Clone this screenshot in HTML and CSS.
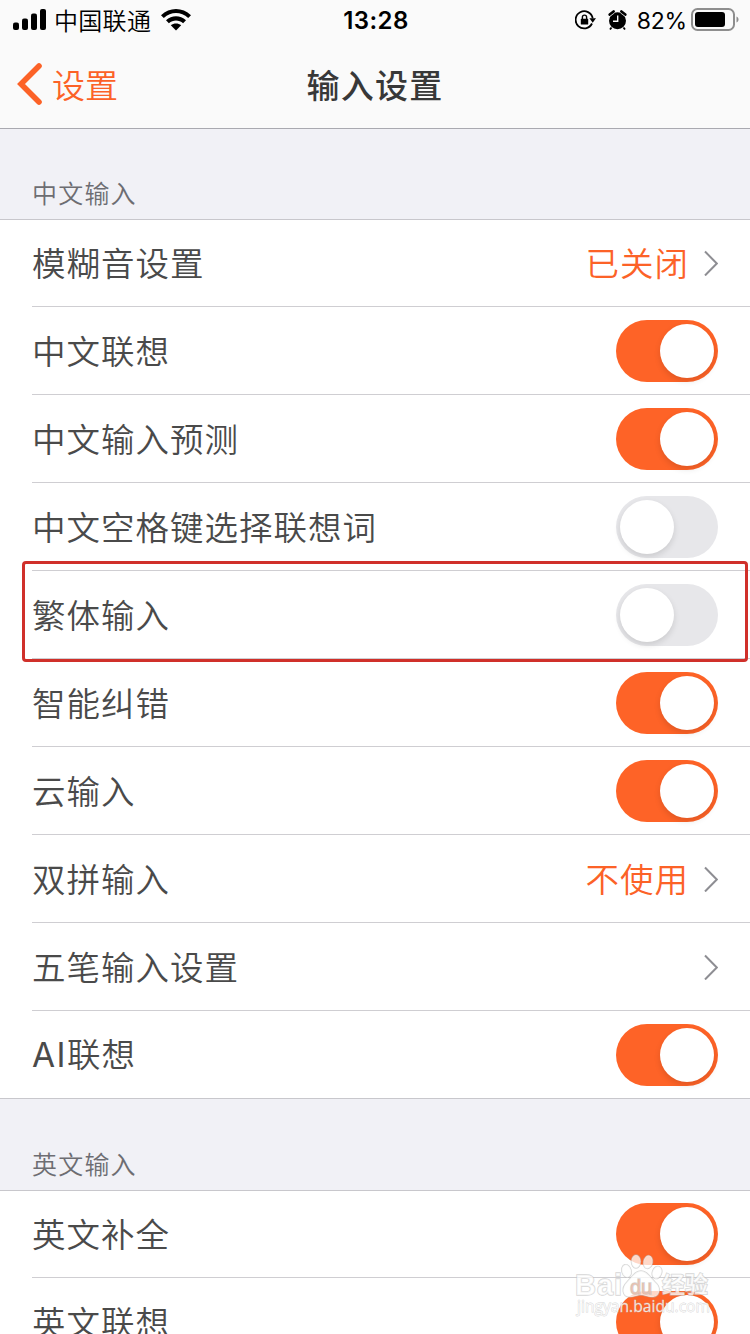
FILE: index.html
```html
<!DOCTYPE html>
<html lang="zh-CN">

<head>
    <meta charset="UTF-8">
    <meta name="viewport" content="width=device-width, initial-scale=1.0">
    <title>输入设置</title>
    <link rel="stylesheet" href="styles.css">
</head>

<body>

    <!-- Header -->
    <header>
        <div class="status-bar">
            <div class="status-left">
                <svg class="signal" width="33" height="22" viewBox="0 0 33 22">
                    <rect x="0" y="13.5" width="6" height="7.5" rx="2"/>
                    <rect x="9" y="9.5" width="6" height="11.5" rx="2"/>
                    <rect x="18" y="4.5" width="6" height="16.5" rx="2"/>
                    <rect x="27" y="0" width="6" height="21" rx="2"/>
                </svg>
                <span class="carrier">中国联通</span>
                <svg class="wifi" width="30" height="22" viewBox="0 0 30 22">
                    <path d="M0 6.2C8.5 -2 21.5 -2 30 6.2L27.2 9C20 2.4 10 2.4 2.8 9Z"/>
                    <path d="M5 11.3C10.7 6 19.3 6 25 11.3L22.1 14.2C18 10.6 12 10.6 7.9 14.2Z"/>
                    <path d="M9.8 16.3C12.8 13.9 17.2 13.9 20.2 16.3L15 21.5Z"/>
                </svg>
            </div>
            <div class="time">13:28</div>
            <div class="status-right">
                <svg class="lock" width="21" height="20" viewBox="0 0 21 20">
                    <path d="M17 13.5A8.6 8.6 0 1 1 17.7 8.4" fill="none" stroke="#000" stroke-width="1.8"/>
                    <path d="M14.4 8.2H21L17.7 12.8Z"/>
                    <rect x="5.8" y="8.8" width="7.4" height="5.8" rx="0.6"/>
                    <path d="M7.4 9V7.2A2.1 2.1 0 0 1 11.6 7.2V9" fill="none" stroke="#000" stroke-width="1.4"/>
                </svg>
                <svg class="alarm" width="19" height="21" viewBox="0 0 19 21">
                    <circle cx="9.5" cy="10.7" r="8.5"/>
                    <path d="M1.7 4.6L5.6 1.4M17.3 4.6L13.4 1.4" stroke="#000" stroke-width="2.6" stroke-linecap="round"/>
                    <path d="M3.5 17.5L2 19.6M15.5 17.5L17 19.6" stroke="#000" stroke-width="1.8"/>
                    <path d="M2.4 6.2L6.6 2.8M16.6 6.2L12.4 2.8" stroke="#fafafa" stroke-width="0.7"/>
                    <path d="M9.7 5.5V11.2H5" fill="none" stroke="#fafafa" stroke-width="1.4"/>
                </svg>
                <span class="percent">82%</span>
                <svg class="battery" width="48" height="24" viewBox="0 0 48 24">
                    <rect x="1" y="1" width="42" height="21" rx="5.5" fill="none" stroke="#8e8e8e" stroke-width="2"/>
                    <rect x="4" y="4" width="30" height="15" rx="3"/>
                    <path d="M45.5 8.5C48.2 9.5 48.2 13.5 45.5 14.5Z" fill="#8e8e8e"/>
                </svg>
            </div>
        </div>
        <nav>
            <a class="back" href="#">
                <svg width="26" height="42" viewBox="0 0 26 42">
                    <path d="M23 3L5 21L23 39" fill="none" stroke="#fc6227" stroke-width="5.6" stroke-linecap="round"/>
                </svg>
                <span>设置</span>
            </a>
            <h1>输入设置</h1>
        </nav>
    </header>

    <!-- Chinese Input -->
    <section>
        <h2>中文输入</h2>
        <ul>
            <li>
                <span class="label">模糊音设置</span>
                <span class="value">已关闭</span>
                <svg class="arrow" width="14" height="26" viewBox="0 0 14 26"><path d="M1 1.5L12.8 13.5L1 25.5"/></svg>
            </li>
            <li><span class="label">中文联想</span><span class="switch on"></span></li>
            <li><span class="label">中文输入预测</span><span class="switch on"></span></li>
            <li><span class="label">中文空格键选择联想词</span><span class="switch"></span></li>
            <li class="marked"><span class="label">繁体输入</span><span class="switch"></span></li>
            <li><span class="label">智能纠错</span><span class="switch on"></span></li>
            <li><span class="label">云输入</span><span class="switch on"></span></li>
            <li>
                <span class="label">双拼输入</span>
                <span class="value">不使用</span>
                <svg class="arrow" width="14" height="26" viewBox="0 0 14 26"><path d="M1 1.5L12.8 13.5L1 25.5"/></svg>
            </li>
            <li>
                <span class="label">五笔输入设置</span>
                <svg class="arrow" width="14" height="26" viewBox="0 0 14 26"><path d="M1 1.5L12.8 13.5L1 25.5"/></svg>
            </li>
            <li><span class="label"><span class="latin">AI</span>联想</span><span class="switch on"></span></li>
        </ul>
    </section>

    <!-- English Input -->
    <section class="english">
        <h2>英文输入</h2>
        <ul>
            <li><span class="label">英文补全</span><span class="switch on"></span></li>
            <li><span class="label">英文联想</span><span class="switch on"></span></li>
        </ul>
    </section>

    <!-- Watermark -->
    <div class="watermark">
        <svg width="144" height="66" viewBox="0 0 144 66">
            <g class="wm-shape">
                <ellipse cx="51.5" cy="17" rx="4.6" ry="6.5" transform="rotate(-15 51.5 17)"/>
                <ellipse cx="61" cy="7.5" rx="4.6" ry="6.5"/>
                <ellipse cx="73" cy="8" rx="4.6" ry="6.5" transform="rotate(10 73 8)"/>
                <ellipse cx="82" cy="18.5" rx="4.6" ry="6.3" transform="rotate(20 82 18.5)"/>
                <path d="M66 17C72 17 75 23 80 28C87 34 85 43 77 43C72 43 70 41 66 41C62 41 60 43 55 43C47 43 46 34 52 28C57 23 60 17 66 17Z"/>
            </g>
            <text class="wm-logo" x="0" y="41" textLength="47">Bai</text>
            <text class="wm-du" x="55" y="40" textLength="22">du</text>
            <text class="wm-logo-cn" x="87" y="39" textLength="46">经验</text>
            <text class="wm-url" x="2" y="58" textLength="133" lengthAdjust="spacingAndGlyphs">jingyan.baidu.com</text>
        </svg>
    </div>

</body>

</html>
```
FILE: styles.css
```css
/* General Reset */
* {
    margin: 0;
    padding: 0;
    box-sizing: border-box;
}

body {
    position: relative;
    width: 750px;
    height: 1334px;
    overflow: hidden;
    font-family: "Noto Sans CJK SC", sans-serif;
    background-color: #f1f1f6;
    color: #4a4a4a;
}

/* Header */
header {
    height: 129px;
    background-color: #fafafa;
    border-bottom: 1px solid #a9a9b0;
}

.status-bar {
    display: grid;
    grid-template-columns: 1fr auto 1fr;
    align-items: center;
    height: 40px;
    padding: 0 11px 0 13px;
    color: #000;
}

.status-left,
.status-right {
    display: flex;
    align-items: center;
}

.status-right {
    justify-content: flex-end;
}

.carrier {
    margin: 0 10px 0 8px;
    font-size: 24px;
    font-weight: 350;
    line-height: 40px;
    letter-spacing: 0.3px;
}

.time {
    padding-top: 2px;
    font-family: Inter, sans-serif;
    font-size: 24px;
    font-weight: 600;
    line-height: 38px;
    letter-spacing: 0.4px;
}

.lock {
    margin-right: 12px;
}

.alarm {
    margin-right: 10px;
}

.percent {
    padding-top: 2px;
    font-family: Inter, sans-serif;
    font-size: 23px;
    line-height: 38px;
    letter-spacing: -0.2px;
    margin-right: 4px;
}

/* Navigation Bar */
nav {
    display: grid;
    grid-template-columns: 1fr auto 1fr;
    align-items: center;
    height: 88px;
    padding: 0 16px;
}

.back {
    display: flex;
    align-items: center;
    gap: 10px;
    color: #fc6227;
    font-size: 33px;
    font-weight: 350;
    line-height: 48px;
    text-decoration: none;
}

h1 {
    margin-top: -1px;
    font-size: 33px;
    font-weight: 500;
    line-height: 48px;
    letter-spacing: 1.2px;
    color: #383838;
}

/* Settings Groups */
h2 {
    display: flex;
    align-items: flex-end;
    height: 90px;
    padding: 0 32px 9px;
    font-size: 25px;
    font-weight: 350;
    line-height: 36px;
    letter-spacing: 1.2px;
    color: #6d6d72;
}

.english h2 {
    height: 91px;
}

ul {
    list-style: none;
    background-color: #fff;
    background-image: linear-gradient(#c8c7cc, #c8c7cc);
    background-size: 100% 1px;
    background-repeat: no-repeat;
    border-bottom: 1px solid #c8c7cc;
}

li {
    position: relative;
    display: flex;
    align-items: center;
    height: 88px;
    margin-left: 32px;
    padding-right: 32px;
    border-bottom: 1px solid #cfced2;
}

li:last-child {
    height: 87px;
    border-bottom: none;
}

.label,
.value {
    padding-bottom: 1px;
    font-size: 33.5px;
    font-weight: 350;
    line-height: 48px;
    letter-spacing: 1px;
}

.label {
    flex: 1;
}

.latin {
    font-family: Inter, sans-serif;
    font-weight: 400;
    letter-spacing: 1.4px;
}

.value {
    margin-right: 15px;
    color: #fc6227;
}

.arrow {
    fill: none;
    stroke: #8e8e93;
    stroke-width: 2;
}

/* Red frame around the row */
.marked::after {
    content: "";
    box-sizing: border-box;
    position: absolute;
    top: -10px;
    left: -10px;
    width: 726px;
    height: 101px;
    border: 3px solid #d0302a;
    border-radius: 4px;
    z-index: 1;
}

/* Switch */
.switch {
    display: flex;
    width: 102px;
    height: 62px;
    padding: 4px;
    border-radius: 31px;
    background-color: #e7e7ea;
}

.switch::before {
    content: "";
    width: 54px;
    height: 54px;
    border-radius: 50%;
    background-color: #fff;
    box-shadow: 0 3px 6px rgba(0, 0, 0, 0.12);
}

.switch.on {
    justify-content: flex-end;
    background-color: #fe6327;
}

/* Watermark */
.watermark {
    position: absolute;
    left: 575px;
    top: 1254px;
    height: 66px;
}

.watermark text,
.wm-shape {
    fill: rgba(255, 255, 255, 0.75);
    stroke: rgba(185, 185, 185, 0.6);
    stroke-width: 1.4;
    paint-order: stroke;
}

.wm-logo,
.wm-du {
    font-family: "Liberation Sans", sans-serif;
    font-size: 29px;
    font-weight: bold;
}

.watermark .wm-du {
    font-size: 20px;
    font-weight: normal;
    fill: rgba(235, 190, 170, 0.9);
}

.wm-logo-cn {
    font-size: 23px;
    font-weight: bold;
}

.watermark .wm-url {
    font-family: "Open Sans", sans-serif;
    font-size: 16px;
    stroke-width: 0.8;
}
```
